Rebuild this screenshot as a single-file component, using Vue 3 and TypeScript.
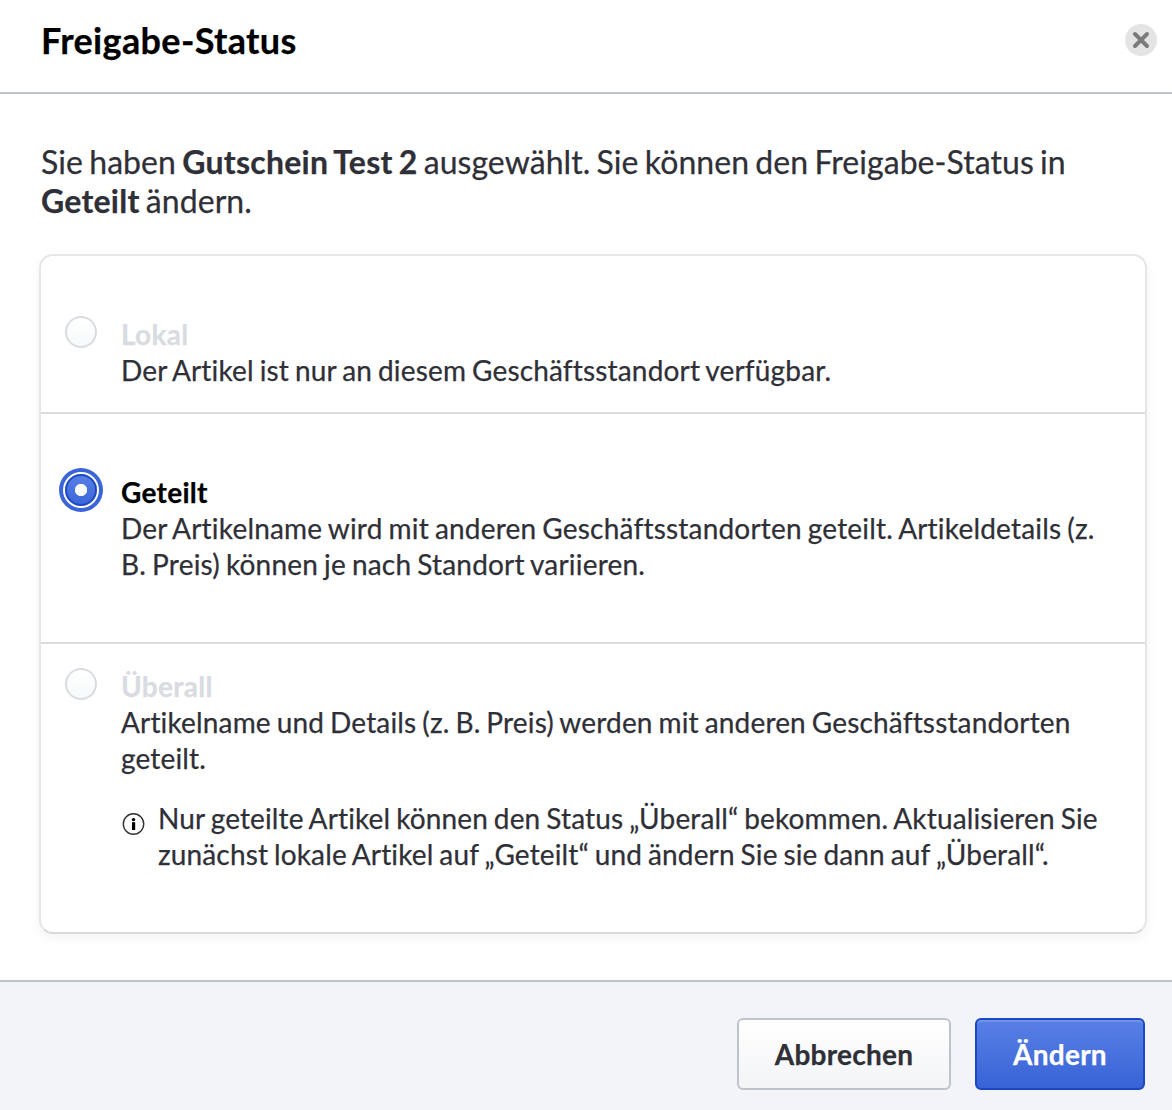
<script setup lang="ts">
interface Option { id: string; label: string; text: string; disabled: boolean; note?: string }

const selected = 'shared'
const options: Option[] = [
  { id: 'local', label: 'Lokal', text: 'Der Artikel ist nur an diesem Geschäftsstandort verfügbar.', disabled: true },
  { id: 'shared', label: 'Geteilt', text: 'Der Artikelname wird mit anderen Geschäftsstandorten geteilt. Artikeldetails (z. B. Preis) können je nach Standort variieren.', disabled: false },
  { id: 'global', label: 'Überall', text: 'Artikelname und Details (z. B. Preis) werden mit anderen Geschäftsstandorten geteilt.', disabled: true, note: 'Nur geteilte Artikel können den Status „Überall“ bekommen. Aktualisieren Sie zunächst lokale Artikel auf „Geteilt“ und ändern Sie sie dann auf „Überall“.' },
]
</script>

<template>
  <div class="dialog">
    <header class="header">
      <h1>Freigabe-Status</h1>
      <button class="close" aria-label="Schließen">
        <svg width="32" height="32" viewBox="0 0 32 32"><circle cx="16" cy="16" r="16" fill="#e4e4e4" /><path d="M10 10l12 12M22 10L10 22" stroke="#7b7b7b" stroke-width="4" stroke-linecap="round" /></svg>
      </button>
    </header>
    <main class="body">
      <p class="intro">Sie haben <b>Gutschein Test 2</b> ausgewählt. Sie können den Freigabe-Status in <b>Geteilt</b> ändern.</p>
      <div class="card">
        <section v-for="o in options" :key="o.id" class="option" :class="[o.id, { disabled: o.disabled }]">
          <span class="radio" :class="{ checked: o.id === selected }"></span>
          <div class="content">
            <h2>{{ o.label }}</h2>
            <p>{{ o.text }}</p>
            <div v-if="o.note" class="note">
              <svg width="24" height="24" viewBox="0 0 24 24"><circle cx="12.5" cy="12" r="10.2" fill="none" stroke="#333" stroke-width="1.4" /><circle cx="12.5" cy="7.6" r="1.7" /><path d="M11 10.2h3.2v7.8H11z" /></svg>
              <p>{{ o.note }}</p>
            </div>
          </div>
        </section>
      </div>
    </main>
    <footer class="footer">
      <button class="btn cancel">Abbrechen</button>
      <button class="btn primary">Ändern</button>
    </footer>
  </div>
</template>

<style>
body { margin: 0; background: #fff; }
</style>
<style scoped>
.dialog { width: 1172px; height: 1110px; display: flex; flex-direction: column; overflow: hidden; box-sizing: border-box; font-family: Lato, sans-serif; font-variant-ligatures: none; -webkit-text-stroke: .25px; color: #2f3037; background: #fff; }
.dialog * { box-sizing: border-box; }
h1, h2, p { margin: 0; }
.header { height: 94px; flex: none; display: flex; justify-content: space-between; padding: 18px 15px 0 41px; border-bottom: 2px solid #bdc3ca; }
h1 { font-size: 36px; line-height: 44px; font-weight: 700; color: #000; letter-spacing: .35px; }
.close { padding: 0; border: 0; background: none; width: 32px; height: 32px; margin-top: 6px; }
.close svg { display: block; }
.body { flex: none; height: 886px; padding: 48px 26px 0 40px; }
.intro { font-size: 32px; line-height: 39px; padding-left: 1px; word-spacing: -2px; letter-spacing: .06px; }
.intro b { letter-spacing: .25px; }
.card { height: 680px; margin-top: 34px; margin-left: -1px; margin-right: -1px; border: 2px solid #e6e6e6; border-bottom-color: #d9d9d9; border-radius: 14px; box-shadow: 0 4px 12px rgba(0,0,0,.05); }
.option { display: flex; padding-left: 24px; border-bottom: 2px solid #d8dce1; }
.option.local { height: 158px; padding-top: 60px; }
.option.shared { height: 230px; padding-top: 60px; }
.option.global { padding-top: 24px; border: 0; }
.content { margin-left: 24px; width: 992px; font-size: 28px; line-height: 36px; word-spacing: -1.4px; letter-spacing: .16px; }
.shared .content { letter-spacing: .2px; }
.note { letter-spacing: .14px; }
h2 { font-size: 28px; line-height: 36px; font-weight: 700; color: #000; letter-spacing: .3px; }
.disabled h2 { color: #d8dce1; }
.radio { flex: none; width: 32px; height: 32px; border-radius: 50%; border: 2px solid #d8dce1; background: linear-gradient(#fff, #f7f9fa); }
.radio.checked { border: 2px solid #1d48c4; background: radial-gradient(circle, #fafbfc 5.8px, transparent 6.5px), linear-gradient(#5a80e6, #3965d8); background-origin: border-box; box-shadow: 0 0 0 2px #fff, 0 0 0 6px #3965d8; }
.note { display: flex; margin-top: 24px; }
.note svg { flex: none; margin: 11.5px 13px 0 0; -webkit-text-stroke: 0; }
.footer { flex: 1; display: flex; justify-content: flex-end; gap: 24px; padding: 36px 27px 0; background: #f3f4f8; border-top: 2px solid #bdc3ca; }
.btn { height: 72px; border-radius: 6px; font: 700 28px Lato, sans-serif; padding: 0; letter-spacing: .25px; }
.cancel { width: 214px; color: #2f3037; background: linear-gradient(#fff, #f3f4f7); border: 2px solid #bdc3ca; }
.primary { width: 170px; color: #fff; background: linear-gradient(#5a80e6, #3763d6); border: 2px solid #1d48c4; box-shadow: inset 0 2px 0 rgba(255,255,255,.15); }
</style>
